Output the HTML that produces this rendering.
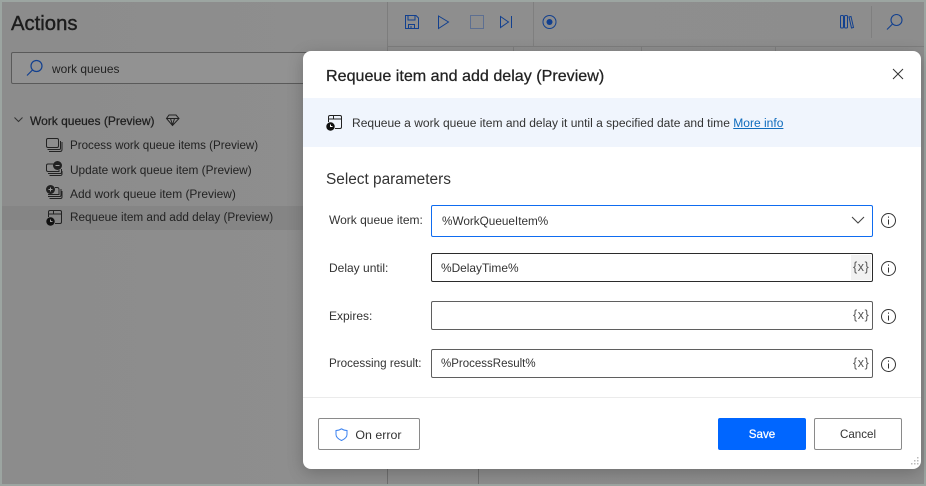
<!DOCTYPE html>
<html><head><meta charset="utf-8"><style>
html,body{margin:0;padding:0;width:926px;height:486px;overflow:hidden;background:#9ca5a1}
*{box-sizing:border-box}
body{font-family:"Liberation Sans",sans-serif;position:relative}
.a{position:absolute;white-space:nowrap}
.bg{position:absolute;left:2px;top:2px;width:922px;height:482px;background:linear-gradient(90deg,#8c8c8c,#8e8e8e 40%,#8d8d8d)}
.panelb{left:387px;top:2px;width:1px;height:482px;background:#7d7d7d}
.t{font-size:12px;color:#1f1f1f}
.gt{color:#222}
.inp{position:absolute;left:431px;width:442px;height:29px;border:1px solid #5f5f5f;border-bottom-width:1.500px;border-radius:2px;background:#fff;font-size:12px;color:#333;padding:6px 9px;line-height:16px}
.lab{position:absolute;left:329px;font-size:12px;color:#333;white-space:nowrap;line-height:16px}
.x{position:absolute;left:853px;font-size:12.500px;color:#555;white-space:nowrap;line-height:16px;letter-spacing:.6px}
.btn{position:absolute;top:418px;height:32px;border:1px solid #8a8a8a;border-radius:2px;background:#fff;font-size:11.600px;color:#333;text-align:center;line-height:32px}
svg{position:absolute;overflow:visible}
</style></head><body>
<div class="bg"></div>
<div class="a panelb"></div>
<div class="a" style="left:388px;top:46px;width:536px;height:1px;background:#7d7d7d"></div>
<div class="a" style="left:533px;top:2px;width:1px;height:44px;background:#7f7f7f"></div>
<div class="a" style="left:871px;top:6px;width:1px;height:32px;background:#7f7f7f"></div>
<div class="a" style="left:513px;top:47px;width:1px;height:4px;background:#7d7d7d"></div>
<div class="a" style="left:641px;top:47px;width:1px;height:4px;background:#7d7d7d"></div>
<div class="a" style="left:775px;top:47px;width:1px;height:4px;background:#7d7d7d"></div>
<div class="a" style="left:387px;top:469px;width:1px;height:15px;background:#6f6f6f"></div>
<div class="a" style="left:478px;top:469px;width:1px;height:15px;background:#6f6f6f"></div>
<div class="a" style="left:2px;top:206px;width:301px;height:24px;background:#858585"></div>
<div class="a" style="left:11px;top:10px;font-size:20.300px;font-weight:400;color:#1c1c1c;line-height:28px;-webkit-text-stroke:.4px #1c1c1c">Actions</div>
<div class="a" style="left:11px;top:52px;width:300px;height:32px;border:1px solid #5a5a5a;border-radius:2px;background:#929292"></div>
<svg style="left:26px;top:59px" width="18" height="18" fill="none" stroke="#12408f" stroke-width="1.200"><circle cx="10.500" cy="7" r="5.500"/><path d="M6.500 11L1 16.500"/></svg>
<div class="a t" style="left:52px;top:61px;line-height:16px;font-size:11.900px;color:#222">work queues</div>
<svg style="left:14px;top:116px" width="10" height="8" fill="none" stroke="#333" stroke-width="1"><path d="M.5 1.500L4.500 5.500L8.500 1.500"/></svg>
<div class="a" style="left:30px;top:113px;font-size:12px;font-weight:400;-webkit-text-stroke:.25px #1f1f1f;color:#1f1f1f;line-height:16px">Work queues (Preview)</div>
<svg style="left:166px;top:114px" width="14" height="13" fill="none" stroke="#222" stroke-width="1"><path d="M3 1H10L13 4.500L6.500 11.500L.5 4.500ZM.5 4.500H13M4.500 4.500L6.500 11M8.500 4.500L6.500 11"/></svg>
<div class="a t gt" style="left:70px;top:138px;line-height:16px;font-size:11.600px">Process work queue items (Preview)</div>
<div class="a t gt" style="left:70px;top:162px;line-height:16px;font-size:11.850px">Update work queue item (Preview)</div>
<div class="a t gt" style="left:70px;top:186px;line-height:16px;font-size:11.950px">Add work queue item (Preview)</div>
<div class="a t gt" style="left:70px;top:210px;line-height:16px;font-size:11.750px">Requeue item and add delay (Preview)</div>
<svg style="left:46px;top:138px" width="17" height="15" fill="none" stroke="#222" stroke-width="1"><rect x=".5" y=".5" width="12" height="9" rx="1.500"/><path d="M1.500 11.500H13.500Q14.500 11.500 14.500 10V3M3 13.500H14Q16 13.500 16 11.500V4"/></svg>
<svg style="left:46px;top:161px" width="17" height="16" fill="none" stroke="#222" stroke-width="1"><path d="M8 3H2Q.5 3 .5 4.500V9Q.500 10.500 2 10.500H13V9M2 12.500H14.500Q15.500 12.500 15.500 11V8M3.500 14.500H14Q16 14.500 16 13V10"/><circle cx="11.500" cy="4.500" r="4" fill="#222"/><path d="M9.500 4.500H13.500" stroke="#999"/></svg>
<svg style="left:46px;top:185px" width="17" height="16" fill="none" stroke="#222" stroke-width="1"><circle cx="4.500" cy="4.500" r="4" fill="#222"/><path d="M2.500 4.500H6.500M4.500 2.500V6.500" stroke="#999"/><path d="M9 2.500H11Q13 2.500 13 4.500V9.500H2M2 11.500H14Q15 11.500 15 10V4M3.500 13.500H14.500Q16 13.500 16 12V6"/></svg>
<svg style="left:46px;top:210px" width="17" height="16" fill="none" stroke="#222" stroke-width="1"><path d="M2.500 7V2Q2.500.5 4 .5H14Q15.500.5 15.500 2V12Q15.500 13.500 14 13.500H9M2.500 4H7.500V.5M7.500 4L15.500 4"/><circle cx="4.500" cy="11.500" r="4.200" fill="#111" stroke="none"/><path d="M4.500 9.500V11.500H6.500" stroke="#999"/></svg>
<svg style="left:405px;top:15px" width="14" height="14" fill="none" stroke="#12408f" stroke-width="1"><path d="M.5.5H11L13.500 3V13.500H.5ZM3 .5V5H10V.5M3.500 13.500V9.500H9.500V13.500M6 11V13"/></svg>
<svg style="left:437px;top:15px" width="14" height="15" fill="none" stroke="#12408f" stroke-width="1"><path d="M1.500 1L11.500 7L1.500 13.500Z"/></svg>
<div class="a" style="left:470px;top:15px;width:14px;height:14px;border:1px solid #5d6f91"></div>
<svg style="left:500px;top:15px" width="14" height="14" fill="none" stroke="#12408f" stroke-width="1"><path d="M.5 1.500L8.500 7L.5 12.500ZM11.500 1V13"/></svg>
<svg style="left:542px;top:15px" width="16" height="16" fill="none" stroke="#12408f" stroke-width="1"><circle cx="7.500" cy="7" r="6.500"/><circle cx="7.500" cy="7" r="3" fill="#12408f" stroke="none"/></svg>
<svg style="left:840px;top:15px" width="15" height="14" fill="none" stroke="#12408f" stroke-width="1"><rect x=".5" y=".5" width="3" height="12.500" rx="1"/><rect x="4.500" y=".5" width="3" height="12.500" rx="1"/><path d="M9 2L11 1.500L13.500 12.500L11.500 13Z"/></svg>
<svg style="left:886px;top:13px" width="18" height="18" fill="none" stroke="#12408f" stroke-width="1.100"><circle cx="10.500" cy="7" r="5.500"/><path d="M6.500 11L1 16.500"/></svg>

<div class="a" style="left:303px;top:51px;width:618px;height:418px;background:#fff;border-radius:8px;box-shadow:0 4px 16px rgba(0,0,0,.22)"></div>
<div class="a" style="left:326px;top:66px;font-size:16.100px;line-height:20px;color:#222;-webkit-text-stroke:.25px #222">Requeue item and add delay (Preview)</div>
<svg style="left:892px;top:68px" width="12" height="12" fill="none" stroke="#333" stroke-width="1"><path d="M1 1L11 11M11 1L1 11"/></svg>
<div class="a" style="left:303px;top:98px;width:618px;height:49px;background:#f0f5fd"></div>
<svg style="left:326px;top:115px" width="17" height="16" fill="none" stroke="#222" stroke-width="1"><path d="M2.500 7V2Q2.500.5 4 .5H14Q15.500.5 15.500 2V12Q15.500 13.500 14 13.500H9M2.500 4H7.500V.5M7.500 4L15.500 4"/><circle cx="4.500" cy="11.500" r="4.200" fill="#111" stroke="none"/><path d="M4.500 9.500V11.500H6.500" stroke="#fff"/></svg>
<div class="a" style="left:352px;top:115px;font-size:12.040px;line-height:16px;color:#333">Requeue a work queue item and delay it until a specified date and time <span style="color:#0f6cbd;text-decoration:underline">More info</span></div>
<div class="a" style="left:326px;top:170px;font-size:15.400px;line-height:20px;color:#333">Select parameters</div>

<div class="lab" style="top:212px">Work queue item:</div>
<div class="lab" style="top:260px">Delay until:</div>
<div class="lab" style="top:308px">Expires:</div>
<div class="lab" style="top:356px;font-size:11.650px">Processing result:</div>

<div class="inp" style="top:205px;height:32px;border-color:#0f6cf0;padding:8px 10px;font-size:11.750px">%WorkQueueItem%</div>
<div class="inp" style="top:253px;border-color:#2b2b2b;font-size:11.900px">%DelayTime%</div>
<div class="inp" style="top:301px"></div>
<div class="inp" style="top:349px;font-size:11.500px">%ProcessResult%</div>
<svg style="left:851px;top:216px" width="14" height="9" fill="none" stroke="#444" stroke-width="1.100"><path d="M1 1L7 7L13 1"/></svg>
<div class="a" style="left:851px;top:255px;width:20px;height:25px;background:#f1f1f1"></div>
<div class="x" style="top:259px">{x}</div>
<div class="x" style="top:307px">{x}</div>
<div class="x" style="top:355px">{x}</div>
<svg style="left:881px;top:213px" width="15" height="15" fill="none" stroke="#333" stroke-width="1"><circle cx="7.500" cy="7.500" r="7"/><path d="M7.500 6.500V11.500M7.500 3.500V4.800"/></svg>
<svg style="left:881px;top:261px" width="15" height="15" fill="none" stroke="#333" stroke-width="1"><circle cx="7.500" cy="7.500" r="7"/><path d="M7.500 6.500V11.500M7.500 3.500V4.800"/></svg>
<svg style="left:881px;top:309px" width="15" height="15" fill="none" stroke="#333" stroke-width="1"><circle cx="7.500" cy="7.500" r="7"/><path d="M7.500 6.500V11.500M7.500 3.500V4.800"/></svg>
<svg style="left:881px;top:357px" width="15" height="15" fill="none" stroke="#333" stroke-width="1"><circle cx="7.500" cy="7.500" r="7"/><path d="M7.500 6.500V11.500M7.500 3.500V4.800"/></svg>

<div class="a" style="left:303px;top:397px;width:618px;height:1px;background:#ebebeb"></div>
<div class="btn" style="left:318px;width:102px;padding-left:19px;font-size:12.400px">On error</div>
<svg style="left:335px;top:428px" width="13" height="13" fill="none" stroke="#3b82f0" stroke-width="1"><path d="M6.500 .8Q9 2.500 12 2.500V6.500Q12 10 6.500 12.500Q1 10 1 6.500V2.500Q4 2.500 6.500 .8Z"/></svg>
<div class="btn" style="left:718px;width:88px;background:#0066ff;border-color:#0066ff;color:#fff;-webkit-text-stroke:.25px #fff">Save</div>
<div class="btn" style="left:814px;width:88px">Cancel</div>
<svg style="left:909px;top:457px" width="11" height="11" fill="#bbb"><rect x="8" y="0" width="1.500" height="1.500"/><rect x="5" y="3" width="1.500" height="1.500"/><rect x="8" y="3" width="1.500" height="1.500"/><rect x="2" y="6" width="1.500" height="1.500"/><rect x="5" y="6" width="1.500" height="1.500"/><rect x="8" y="6" width="1.500" height="1.500"/></svg>
</body></html>
